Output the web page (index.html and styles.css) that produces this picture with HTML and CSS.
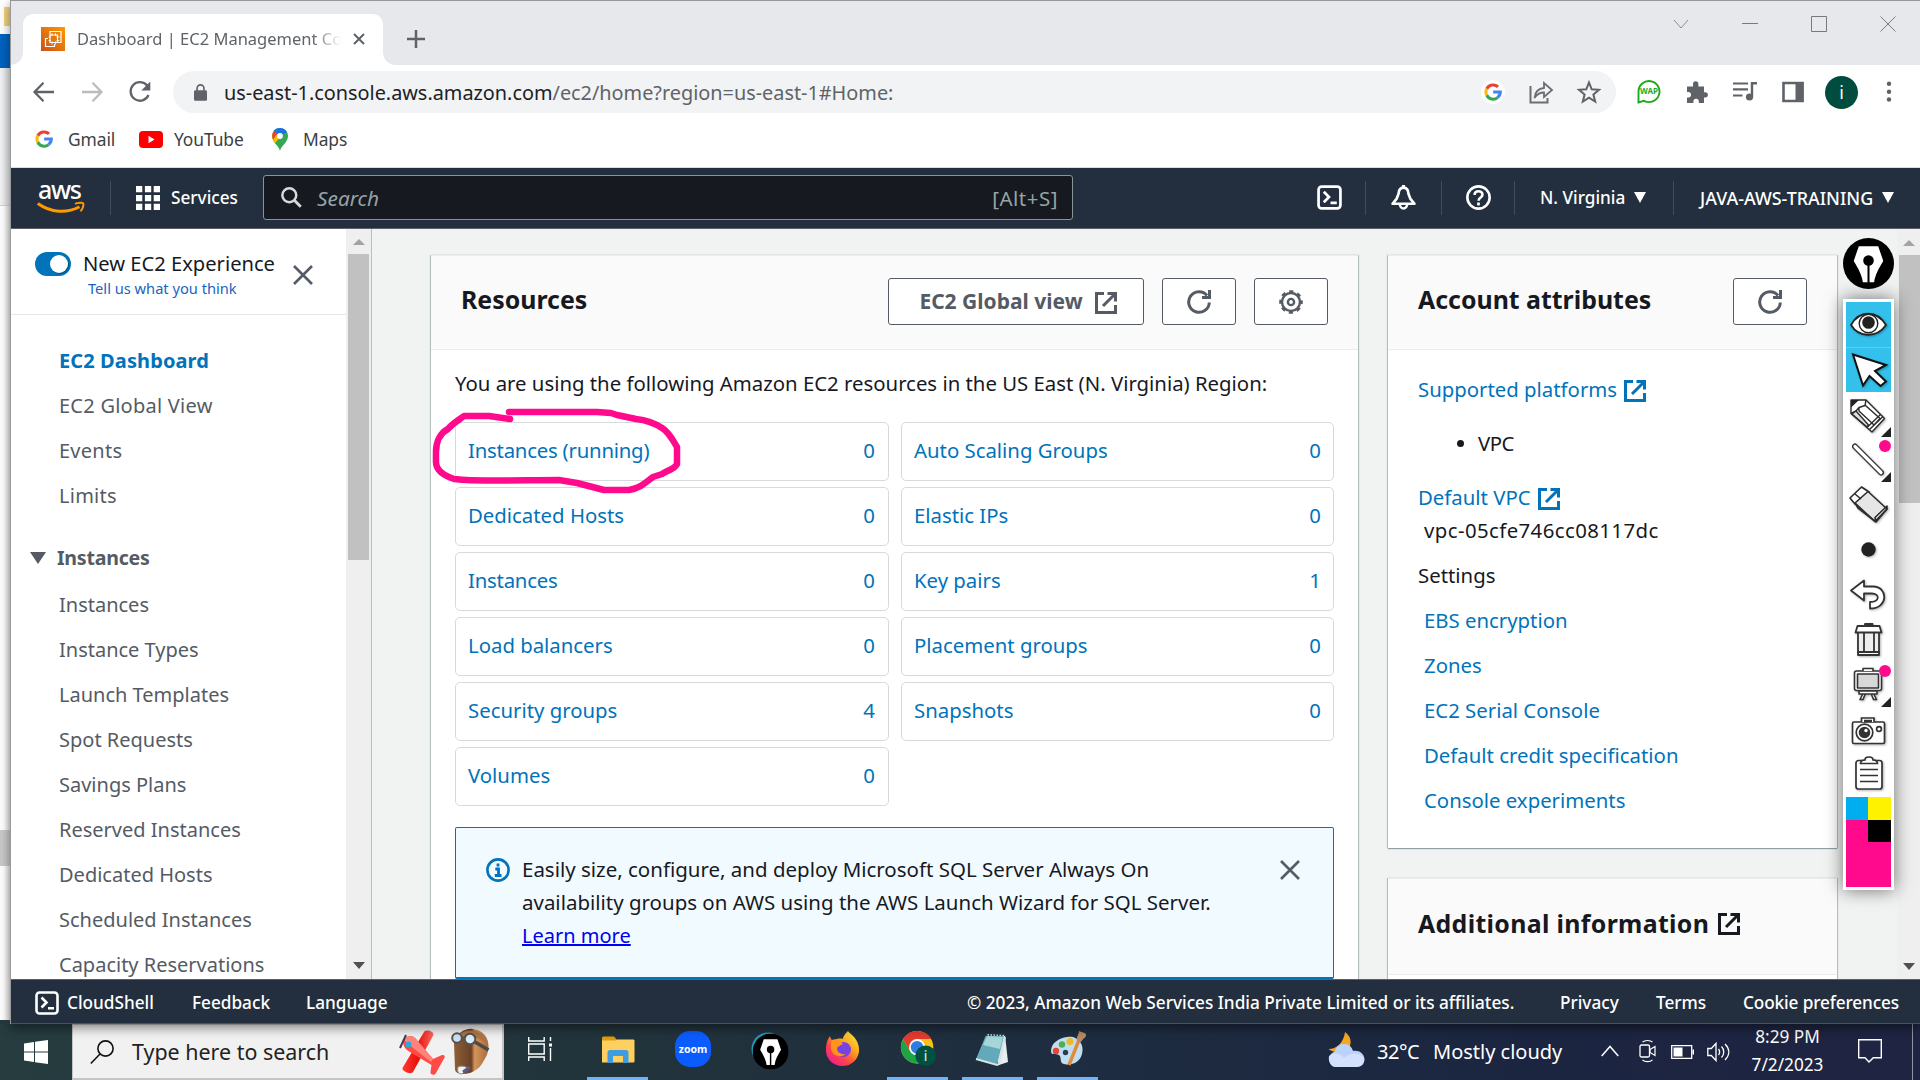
FILE: index.html
```html
<!DOCTYPE html>
<html lang="en">
<head>
<meta charset="utf-8">
<title>Dashboard | EC2 Management Console</title>
<link rel="stylesheet" href="styles.css">
</head>
<body>
<svg class="defs" width="0" height="0" aria-hidden="true">
  <defs>
    <symbol id="ext" viewBox="0 0 22 22"><path d="M9 1.500H1.500v19h19V13M12.500 1.500h8v8M20 2L8 14" fill="none" stroke="currentColor" stroke-width="3"/></symbol>
    <symbol id="refresh" viewBox="0 0 24 24"><path d="M22.300 12.500A10.300 10.300 0 1 1 20 5.500" fill="none" stroke="currentColor" stroke-width="3"/><path d="M22.500 0v7.500H15" fill="none" stroke="currentColor" stroke-width="3"/></symbol>
    <symbol id="close" viewBox="0 0 20 20"><path d="M1 1l18 18M19 1L1 19" fill="none" stroke="currentColor" stroke-width="2.600"/></symbol>
    <symbol id="shell" viewBox="0 0 24 24"><rect x="1.500" y="1.500" width="21" height="21" rx="3" fill="none" stroke="#fff" stroke-width="2.600"/><path d="M6.500 6.500l5 5-5 5M13 17.200h6" fill="none" stroke="#fff" stroke-width="2.600"/></symbol>
    <symbol id="google" viewBox="0 0 20 20"><path d="M3.100 6.400A7.900 7.900 0 0 1 15.600 4.400" fill="none" stroke="#ea4335" stroke-width="3.400"/><path d="M3.100 6.400a7.900 7.900 0 0 0 0 7.200" fill="none" stroke="#fbbc05" stroke-width="3.400"/><path d="M3.100 13.600a7.900 7.900 0 0 0 12 2.600" fill="none" stroke="#34a853" stroke-width="3.400"/><path d="M10.200 10h7.900a8 8 0 0 1-3 6.200" fill="none" stroke="#4285f4" stroke-width="3.400"/></symbol>
    <symbol id="nib" viewBox="0 0 50 50"><circle cx="25" cy="25" r="25" fill="#000"/><path d="M15.500 8h19l5 14.500C35 30 31.500 36 30.500 43.500h-11C18.500 36 15 30 10.500 22.500z" fill="#fff"/><circle cx="25" cy="22" r="5.200"/><path d="M25 22v22" stroke="#000" stroke-width="2"/></symbol>
  </defs>
</svg>
<div class="screen">
  <div class="workspace">
    <div class="behind">
      <div class="behind-top"><i class="behind-folder"></i></div>
      <div class="behind-blue"></div>
      <div class="behind-gray"></div>
      <div class="behind-white"></div>
      <div class="behind-thumb"></div>
      <div class="behind-end"></div>
    </div>
    <div class="browser">
      <div class="tabstrip">
        <div class="tab">
          <svg class="favicon" viewBox="0 0 24 24"><defs><linearGradient id="fav" x1="0" y1="1" x2="1" y2="0"><stop offset="0" stop-color="#c8511b"/><stop offset="1" stop-color="#f90"/></linearGradient></defs><path d="M0 0h24v24H0z" fill="url(#fav)"/><path d="M9 7.500V4.500h11v11h-3M7 11.500H4.500v8h9V17M9 8h7.500v7.500H9z" fill="none" stroke="#fff" stroke-width="1.200"/><path d="M11 6v11.500M14.500 6v11.500M7.500 10h11M7.500 13.500h11" stroke="#fff" stroke-width=".8"/><path d="M10 9h5.500v5.500H10z" fill="#e07b11"/></svg>
          <span class="tab-title">Dashboard | EC2 Management Co</span>
          <svg class="tab-close" viewBox="0 0 12 12"><path d="M1 1l10 10M11 1L1 11" stroke="#5f6368" stroke-width="2"/></svg>
        </div>
        <svg class="tab-new" viewBox="0 0 18 18"><path d="M9 0v18M0 9h18" stroke="#5f6368" stroke-width="2.500"/></svg>
        <div class="window-buttons">
          <svg viewBox="0 0 16 16"><path d="M1 4l7 8 7-8" fill="none" stroke="#8d8f93"/></svg>
          <svg viewBox="0 0 16 16"><path d="M0 7.500h16" stroke="#77797d"/></svg>
          <svg viewBox="0 0 16 16"><path d="M.5.5h15v15H.5z" fill="none" stroke="#77797d"/></svg>
          <svg viewBox="0 0 16 16"><path d="M.5.5l15 15M15.500.5l-15 15" stroke="#77797d"/></svg>
        </div>
      </div>
      <div class="toolbar">
        <svg class="nav-icon" viewBox="0 0 24 24"><path d="M22 12H3M11.500 2.800L2.500 12l9 9.200" fill="none" stroke="#5f6368" stroke-width="2.300"/></svg>
        <svg class="nav-icon" viewBox="0 0 24 24"><path d="M2 12h19M12.500 2.800l9 9.200-9 9.200" fill="none" stroke="#babcbe" stroke-width="2.300"/></svg>
        <svg class="nav-icon" viewBox="0 0 24 24"><path d="M20.500 15A9.300 9.300 0 1 1 19.500 6" fill="none" stroke="#5f6368" stroke-width="2.300"/><path d="M22.300 1.500v9h-9z" fill="#5f6368"/></svg>
        <div class="omnibox">
          <svg class="lock" viewBox="0 0 14 18"><rect y="6.500" width="14" height="11.500" rx="1.500" fill="#5f6368"/><path d="M3.300 7V4.500a3.700 3.700 0 0 1 7.400 0V7" fill="none" stroke="#5f6368" stroke-width="1.800"/></svg>
          <span class="url"><b>us-east-1.console.aws.amazon.com</b>/ec2/home?region=us-east-1#Home:</span>
          <span class="g-badge"><svg viewBox="0 0 20 20"><use href="#google"/></svg></span>
          <svg class="omni-icon" viewBox="0 0 24 24"><path d="M1.500 6v16.500h17V18" fill="none" stroke="#6b6e73" stroke-width="2"/><path d="M5.500 18c.5-6.500 4-9.500 9.500-10V3l8 7-8 7v-4.500c-4.500 0-7 1.500-9.500 5.500z" fill="none" stroke="#6b6e73" stroke-width="1.800"/></svg>
          <svg class="omni-icon" viewBox="0 0 24 24"><path d="M12 2.500l2.700 6.800 7.300.5-5.600 4.700 1.800 7.100L12 17.700l-6.200 3.900 1.800-7.100L2 9.800l7.300-.5z" fill="none" stroke="#5f6368" stroke-width="2"/></svg>
        </div>
        <div class="extensions">
          <svg viewBox="0 0 24 24"><path d="M1.500 22.500V11.500A10.500 10.500 0 1 1 7 20.800z" fill="#fff" stroke="#1aab1a" stroke-width="1.900"/><text x="12" y="14.200" class="wap">WAP</text></svg>
          <svg viewBox="0 0 24 24"><path d="M2 6.500h6V4a2.700 2.700 0 0 1 5.400 0v2.500H19v5.700h1.300a2.600 2.600 0 0 1 0 5.200H19V23h-5.200v-1.500a2.700 2.700 0 0 0-5.400 0V23H2v-5.500h1.300a2.700 2.700 0 0 0 0-5.400H2z" fill="#5f6368"/></svg>
          <svg viewBox="0 0 24 24"><path d="M0 3.500h15M0 9.300h15M0 15.500h9.500" stroke="#5f6368" stroke-width="2.200"/><path d="M19 17V3.200h5" fill="none" stroke="#5f6368" stroke-width="2.400"/><circle cx="16.500" cy="17" r="3.600" fill="#5f6368"/></svg>
          <svg viewBox="0 0 24 24"><path d="M2.500 3h19v18h-19z" fill="none" stroke="#5f6368" stroke-width="2.600"/><path d="M14.500 2h8v20h-8z" fill="#5f6368"/></svg>
          <span class="avatar">i</span>
          <svg viewBox="0 0 24 24"><g fill="#5f6368"><circle cx="12" cy="3.800" r="2.200"/><circle cx="12" cy="11.800" r="2.200"/><circle cx="12" cy="19.500" r="2.200"/></g></svg>
        </div>
      </div>
      <div class="bookmarks">
        <span class="bookmark bookmark-gmail"><svg viewBox="0 0 20 20"><use href="#google"/></svg>Gmail</span>
        <span class="bookmark bookmark-youtube"><svg viewBox="0 0 24 17"><rect width="24" height="17" rx="4" fill="#f00"/><path d="M9.500 4.800v7.400l6-3.700z" fill="#fff"/></svg>YouTube</span>
        <span class="bookmark bookmark-maps"><svg viewBox="0 0 16 23"><path d="M8 23C7 17.500 0 14.500 0 8a8 8 0 0 1 16 0c0 6.500-7 9.500-8 15z" fill="#34a853"/><path d="M.3 10A8 8 0 0 1 1.500 3.500L8 8.500 3 15C1.500 13.200.6 11.800.3 10z" fill="#fbbc04"/><path d="M1.700 3L0 8l1.300 3.800L8 8z" fill="#ea4335"/><path d="M1.700 3A8 8 0 0 1 15 4l-7 4z" fill="#1a73e8"/><path d="M3 15l7-8-5.500-.5L1 12z" fill="#fbbc04"/><circle cx="8" cy="8" r="2.900" fill="#fff"/></svg>Maps</span>
      </div>

      <div class="aws-nav">
        <svg class="aws-logo" viewBox="0 0 48 32"><text x="1" y="16.500" class="aws-word" textLength="44">aws</text><path d="M.8 21.500C14 31 30 31.500 42.500 24.800" fill="none" stroke="#f90" stroke-width="3"/><path d="M38 21.800c3-1.300 7.500-1.500 8.200-.5.800 1.400-.4 5.800-2.700 8" fill="none" stroke="#f90" stroke-width="2"/></svg>
        <i class="nav-divider"></i>
        <svg class="apps" viewBox="0 0 24 24"><path d="M0 0h6.300v6.300H0zM8.900 0h6.300v6.300H8.900zM17.700 0H24v6.300h-6.300zM0 8.900h6.300v6.300H0zM8.900 8.900h6.300v6.300H8.900zM17.700 8.900H24v6.300h-6.300zM0 17.700h6.300V24H0zM8.900 17.700h6.300V24H8.900zM17.700 17.700H24V24h-6.300z" fill="#fff"/></svg>
        <span class="services">Services</span>
        <div class="aws-search">
          <svg viewBox="0 0 22 22"><circle cx="8.700" cy="8.700" r="7.300" fill="none" stroke="#d5dbdb" stroke-width="2.600"/><path d="M13.700 13.700l7 7" stroke="#d5dbdb" stroke-width="3"/></svg>
          <em>Search</em><span>[Alt+S]</span>
        </div>
        <div class="aws-tools">
          <span class="tool-cell cell-shell"><svg viewBox="0 0 24 24"><use href="#shell"/></svg></span>
          <span class="tool-cell cell-bell"><svg viewBox="0 0 24 24"><path d="M12 2.500c-3 0-4.600 2.500-4.800 6L5.500 13 1.500 18h21L18.500 13l-1.700-4.500c-.2-3.500-1.800-6-4.800-6z" fill="none" stroke="#fff" stroke-width="2.600" stroke-linejoin="round"/><path d="M8.500 18.500a3.500 4 0 0 0 7 0" fill="none" stroke="#fff" stroke-width="2.400"/><path d="M12 0v4" stroke="#fff" stroke-width="3"/></svg></span>
          <span class="tool-cell cell-help"><svg viewBox="0 0 24 24"><circle cx="12" cy="12" r="10.700" fill="none" stroke="#fff" stroke-width="2.500"/><path d="M8.300 9.500C8.300 4.800 15.800 5 15.800 9.300c0 2.800-3.700 2.600-3.700 5.700" fill="none" stroke="#fff" stroke-width="2.500"/><path d="M12 16.800v2.800" stroke="#fff" stroke-width="2.600"/></svg></span>
          <span class="tool-cell cell-region">N. Virginia<i class="caret"></i></span>
          <span class="tool-cell cell-account">JAVA-AWS-TRAINING<i class="caret"></i></span>
        </div>
      </div>

      <div class="console">
        <aside class="sidebar">
          <div class="sidebar-head">
            <i class="toggle"></i>
            <div class="experience"><span>New EC2 Experience</span><a>Tell us what you think</a></div>
            <svg class="sidebar-close" viewBox="0 0 20 20"><use href="#close"/></svg>
          </div>
          <ul class="side-list side-top">
            <li class="active">EC2 Dashboard</li>
            <li>EC2 Global View</li>
            <li>Events</li>
            <li>Limits</li>
          </ul>
          <div class="side-group"><i></i>Instances</div>
          <ul class="side-list">
            <li>Instances</li>
            <li>Instance Types</li>
            <li>Launch Templates</li>
            <li>Spot Requests</li>
            <li>Savings Plans</li>
            <li>Reserved Instances</li>
            <li>Dedicated Hosts</li>
            <li>Scheduled Instances</li>
            <li>Capacity Reservations</li>
          </ul>
        </aside>
        <div class="scrollbar side-scroll"><i class="up"></i><i class="thumb"></i><i class="down"></i></div>

        <main class="main">
          <section class="card resources">
            <header class="card-head">
              <h2>Resources</h2>
              <div class="actions">
                <button class="btn btn-view">EC2 Global view<svg viewBox="0 0 22 22"><use href="#ext"/></svg></button>
                <button class="btn btn-icon"><svg viewBox="0 0 24 24"><use href="#refresh"/></svg></button>
                <button class="btn btn-icon"><svg viewBox="0 0 24 24"><circle cx="12" cy="12" r="9" fill="none" stroke="#545b64" stroke-width="2.400"/><circle cx="12" cy="12" r="10.600" fill="none" stroke="#545b64" stroke-width="2.400" stroke-dasharray="4.200 4.125" stroke-dashoffset="2.100"/><circle cx="12" cy="12" r="3.100" fill="none" stroke="#545b64" stroke-width="2.400"/></svg></button>
              </div>
            </header>
            <div class="resources-body">
              <p class="intro">You are using the following Amazon EC2 resources in the US East (N. Virginia) Region:</p>
              <div class="tiles">
                <a class="tile tight">Instances (running)<b>0</b></a><a class="tile">Auto Scaling Groups<b>0</b></a>
                <a class="tile">Dedicated Hosts<b>0</b></a><a class="tile">Elastic IPs<b>0</b></a>
                <a class="tile tight">Instances<b>0</b></a><a class="tile">Key pairs<b>1</b></a>
                <a class="tile">Load balancers<b>0</b></a><a class="tile">Placement groups<b>0</b></a>
                <a class="tile">Security groups<b>4</b></a><a class="tile">Snapshots<b>0</b></a>
                <a class="tile">Volumes<b>0</b></a>
              </div>
              <div class="notice">
                <svg class="notice-icon" viewBox="0 0 24 24"><circle cx="12" cy="12" r="10.600" fill="none" stroke="#0073bb" stroke-width="2.600"/><path d="M12 5.500v3M9.300 11h3.200v6.500M8.800 17.500h6.700" fill="none" stroke="#0073bb" stroke-width="2.800"/></svg>
                <p>Easily size, configure, and deploy Microsoft SQL Server Always On<br>availability groups on AWS using the AWS Launch Wizard for SQL Server.<br><a>Learn more</a></p>
                <svg class="notice-close" viewBox="0 0 20 20"><use href="#close"/></svg>
              </div>
            </div>
          </section>
          <div class="side-cards">
            <section class="card account">
              <header class="card-head">
                <h2>Account attributes</h2>
                <button class="btn btn-refresh"><svg viewBox="0 0 24 24"><use href="#refresh"/></svg></button>
              </header>
              <div class="account-body">
                <p><a>Supported platforms<svg viewBox="0 0 22 22"><use href="#ext"/></svg></a></p>
                <p class="vpc">VPC</p>
                <p><a>Default VPC<svg viewBox="0 0 22 22"><use href="#ext"/></svg></a></p>
                <p class="vpc-id">vpc-05cfe746cc08117dc</p>
                <p class="settings">Settings</p>
                <p class="setting"><a>EBS encryption</a></p>
                <p class="setting"><a>Zones</a></p>
                <p class="setting"><a>EC2 Serial Console</a></p>
                <p class="setting"><a>Default credit specification</a></p>
                <p class="setting"><a>Console experiments</a></p>
              </div>
            </section>
            <section class="card additional">
              <header class="card-head"><h2>Additional information<svg viewBox="0 0 22 22"><use href="#ext"/></svg></h2></header>
            </section>
          </div>
        </main>
        <div class="scrollbar main-scroll"><i class="up"></i><i class="thumb"></i><i class="down"></i></div>
      </div>

      <footer class="aws-footer">
        <svg viewBox="0 0 24 24"><use href="#shell"/></svg>
        <span class="foot-shell">CloudShell</span>
        <span class="foot-feedback">Feedback</span>
        <span>Language</span>
        <span class="foot-copy">© 2023, Amazon Web Services India Private Limited or its affiliates.</span>
        <span class="foot-privacy">Privacy</span>
        <span class="foot-terms">Terms</span>
        <span class="foot-cookie">Cookie preferences</span>
      </footer>
    </div>
  </div>

  <div class="taskbar">
    <div class="start"><svg viewBox="0 0 24 24"><path d="M0 3.400l10-1.400v9.500H0zM11 1.800L24 0v11.500H11zM0 12.500h10V22L0 20.600zM11 12.500h13V24l-13-1.800z" fill="#fff"/></svg></div>
    <div class="search">
      <svg class="search-glass" viewBox="0 0 24 24"><circle cx="15.500" cy="8.500" r="7.600" fill="none" stroke="#111" stroke-width="1.600"/><path d="M10 14L.8 23.500" stroke="#111" stroke-width="1.600"/></svg>
      <span>Type here to search</span>
      <svg class="plane" viewBox="0 0 46 46"><defs><linearGradient id="wing" x1="0" y1="0" x2="1" y2="0"><stop offset="0" stop-color="#ff3b30"/><stop offset=".5" stop-color="#e8100c"/><stop offset="1" stop-color="#ff6a60"/></linearGradient></defs><path d="M24 3c2-3 10-1 9.500 3L13 43c-2 3-11-.5-10.500-4z" fill="url(#wing)"/><path d="M4 11c2-5 9-5.500 12-1L33 30l9-4c2.500-.5 3.500 2 2 3.500L36 44c-1 3-6 2-5.500-1l1-7L10 23C4.500 20 2 15 4 11z" fill="#ff4b43"/><path d="M4 11c2-5 9-5.500 12-1L33 30l-2 3L8 15z" fill="#ff837b"/><circle cx="8.500" cy="15.500" r="3" fill="#2aa9e0"/><path d="M6 6L0 19" stroke="#443a55" stroke-width="2"/></svg>
      <svg class="pilot" viewBox="0 0 38 46"><defs><linearGradient id="hat" x1="0" y1="0" x2="1" y2="0"><stop offset="0" stop-color="#8d6038"/><stop offset=".5" stop-color="#6b4126"/><stop offset=".6" stop-color="#d3955b"/><stop offset="1" stop-color="#a96a3b"/></linearGradient></defs><path d="M3 14C5 4 14-1 22 0c10 1 16 9 15.500 18-.3 7-3 11-5.500 15-2 5-8 9-13 11-8 2-15 1-15-4z" fill="url(#hat)"/><path d="M5 10C10 1 22-1 30 5c4 3 7 7 7 11C28 7 16 4 5 10z" fill="#ad7446"/><path d="M14 7l10 6 13.500 8" fill="none" stroke="#4e4a44" stroke-width="3.500"/><circle cx="6" cy="9" r="4.800" fill="#cde0f3" stroke="#55534e" stroke-width="2"/><circle cx="19" cy="10" r="5.300" fill="#dcebfa" stroke="#55534e" stroke-width="2"/><path d="M7 38c4-2 8 0 10 1l-6 6c-4 0-5-3-4-7z" fill="#f2f2f2" stroke="#a08c79"/><path d="M12 43l7-5" stroke="#5a5b8c" stroke-width="3"/></svg>
    </div>
    <div class="task-icons">
      <span class="app first"><svg class="taskview" viewBox="0 0 24 24"><path d="M.7 0v4h15.500V0M.7 24v-4h15.500v4M.7 7h15.500v10H.7zM22.500 0v4M22.500 11v13" fill="none" stroke="#fff" stroke-width="1.400"/><path d="M21 6.500h3v3h-3z" fill="#fff"/></svg></span>
      <span class="app open"><svg viewBox="0 0 36 36"><path d="M2 7c0-1 .7-1.500 1.500-1.500H14l3 3.500h17v20H2z" fill="#dd9b0f"/><path d="M2 9.500h13l2-1h16c1 0 1.500.5 1.500 1.500v20c0 1-.5 1.500-1.500 1.500H2z" fill="#ffd05f"/><path d="M7.500 32V21.500c0-1.500 1-2.500 2.500-2.500h16c1.500 0 2.500 1 2.500 2.500V32h-5.500v-7H13v7z" fill="#3f9ce0"/></svg></span>
      <span class="app"><svg viewBox="0 0 36 36"><rect width="36" height="36" rx="15" fill="#0b5cff"/><text x="18" y="21.500" class="zoom">zoom</text></svg></span>
      <span class="app"><svg viewBox="0 0 36 36"><circle cx="18" cy="18" r="16.500" fill="#1e9abf"/><svg x="2.600" y="2.600" width="30.800" height="30.800" viewBox="0 0 50 50"><use href="#nib"/></svg></svg></span>
      <span class="app"><svg viewBox="0 0 36 36"><defs><linearGradient id="ff" x1="1" y1="0" x2=".2" y2="1"><stop offset="0" stop-color="#fff04a"/><stop offset=".4" stop-color="#ffa81c"/><stop offset=".7" stop-color="#ff4545"/><stop offset="1" stop-color="#f1189a"/></linearGradient></defs><path d="M23 0c2 3 8 6 10 13 4 11-4 22-15 22S0 27 1 17C1.500 11 3 8 5 5c.5 2 1 3 2 4 4-1 9-2 11-1 0-3 3-6 5-8z" fill="url(#ff)"/><circle cx="18.500" cy="18.500" r="7.500" fill="#7542e5"/><path d="M7 9c4-1 9 1 11 4-2 1-5 2-6 4 0 5 5 7 9 6-6 5-15 1-15-6 0-3 0-6 1-8z" fill="#ff9320"/></svg></span>
      <span class="app open"><svg viewBox="0 0 40 40"><circle cx="19" cy="18" r="18" fill="#fbc116"/><path d="M3.400 9A18 18 0 0 1 34.600 9H19l-7.800 13.500z" fill="#e33b2e"/><path d="M3.400 9A18 18 0 0 0 19 36l7.800-13.500H11.200z" fill="#1ea446"/><circle cx="19" cy="18" r="9" fill="#fff"/><circle cx="19" cy="18" r="7" fill="#2f7de1"/><circle cx="28.500" cy="27.500" r="11.500" fill="#00513f"/><text x="28.500" y="33" class="badge-i">i</text></svg></span>
      <span class="app open"><svg viewBox="0 0 36 36"><path d="M11 3l19 1 3 27-9 3z" fill="#e9eef0"/><path d="M11 4l18 1-7 29L1 28z" fill="#62aab9"/><path d="M12 5l16 1-3 12L8 14z" fill="#a6d5da"/><path d="M1 28l21 6 2-1 6-27" fill="none" stroke="#d7e2e4" stroke-width="2"/><path d="M11 3.500h19" stroke="#30383b" stroke-width="3" stroke-dasharray="1.500 1.500"/></svg></span>
      <span class="app open"><svg viewBox="0 0 36 36"><path d="M17 6C27 4 35 13 32 23c-2 8-10 12-18 10-5-1-2-7-5-9s-8 1-8-4C1 12 9 7 17 6z" fill="#bfdff0"/><circle cx="6" cy="20" r="3.200" fill="#e84335"/><circle cx="12" cy="13.500" r="3.200" fill="#50b04e"/><circle cx="20" cy="10.500" r="3.500" fill="#f4b822"/><circle cx="15.500" cy="21.500" r="2.700" fill="#263d52"/><path d="M19 34L29 9" stroke="#e3893b" stroke-width="3.400"/><path d="M27 10c-1-5 2-6 2-10 3 2 7 1 7 4s-3 3-5 7z" fill="#b98a61"/></svg></span>
    </div>
    <div class="tray">
      <svg class="weather" viewBox="0 0 37 36"><path d="M17 0c6 4 7 11 4 16S9 23 .5 17c8 0 15-6 16.500-17z" fill="#f5a623"/><path d="M8 35a8 8 0 0 1-1-15.500C8 14 12 11.500 17 12c5 .5 7 3.500 8 7 6-1 11 2.500 11.500 8 0 5-3 8-8 8z" fill="#bcd2fa"/><path d="M1 24c5-4 12-3 15 2 5-5 15-6 20 0 1 5-3 9-8 9H8c-5 0-8-5-7-11z" fill="#d3e1ff"/></svg>
      <span class="temp">32°C</span><span class="sky">Mostly cloudy</span>
      <svg class="chevron" viewBox="0 0 18 12"><path d="M.7 11L9 1.500l8.300 9.500" fill="none" stroke="#fff" stroke-width="1.500"/></svg>
      <svg class="meet" viewBox="0 0 17 24"><rect x="1" y="6" width="9.500" height="12" rx="1.500" fill="none" stroke="#fff" stroke-width="1.300"/><path d="M11 10.500l5-3v9l-5-3zM3.500 3.200c2-2.300 8-2.300 10 0M3.500 20.800c2 2.300 8 2.300 10 0" fill="none" stroke="#fff" stroke-width="1.200"/></svg>
      <svg class="battery" viewBox="0 0 23 14"><path d="M.7.700h20v12.600H.7z" fill="none" stroke="#fff" stroke-width="1.300"/><path d="M2.500 2.500h9v9h-9zM21.500 4.500H23v5h-1.500z" fill="#fff"/></svg>
      <svg class="speaker" viewBox="0 0 23 20"><path d="M.8 6.500h3.500L9 1.500v17l-4.700-5H.8z" fill="none" stroke="#fff" stroke-width="1.300"/><path d="M11.500 7c1.500 2 1.500 4 0 6M14.500 4.500c3 3 3 8 0 11M18 2c5 5 5 11 0 16" fill="none" stroke="#fff" stroke-width="1.300"/></svg>
      <span class="clock"><span>8:29 PM</span><span>7/2/2023</span></span>
      <svg class="action" viewBox="0 0 24 24"><path d="M.7.700h22.600v18h-8L11 23l-4-4.300H.7z" fill="none" stroke="#fff" stroke-width="1.400"/></svg>
      <i class="show-desktop"></i>
    </div>
  </div>

  <svg class="scribble" viewBox="0 0 256 92"><path d="M77 17L56 14H31C23 20 19 22 15 27C7 31 3 40 3 50V60C3 68 9 73 21 77C45 80 90 78 126 78L144 81 171 88H196C208 86 213 80 220 75L229 72C235 68 242 67 244 62V45C240 38 235 29 229 26C220 20 212 18 203 17L184 13 178 11 164 10H76" transform="translate(5 0)" fill="none" stroke="#ff0a8c" stroke-width="6.500" stroke-linecap="round" stroke-linejoin="round"/></svg>

  <svg class="nib-badge" viewBox="0 0 50 50"><use href="#nib"/></svg>
  <div class="palette">
    <span class="slot selected"><svg viewBox="0 0 45 45"><path d="M5 23C13 8 31 8 40 23 31 36 13 36 5 23z" fill="#fff" stroke="#222" stroke-width="1.800"/><circle cx="22.500" cy="21.500" r="9.300" fill="#fff" stroke="#222" stroke-width="1.400"/><circle cx="22.500" cy="20.500" r="6.300" fill="#222"/></svg></span>
    <span class="slot selected"><svg viewBox="0 0 45 45"><path d="M7 6.500L40 17l-11 6 11 10.500-5.500 4.500L23.500 28 17 37.500z" fill="#fff" stroke="#111" stroke-width="2"/></svg></span>
    <span class="slot"><svg viewBox="0 0 45 45"><g transform="translate(0 2)"><g fill="#fff" stroke="#2b2b2b" stroke-width="1.400" stroke-linejoin="round"><path d="M5 6h15l18.500 18.500L26 38 5 19.500z"/><path d="M5 19.500L10 17l3-3.500 6-2 1-5.500M13 13.500V17l15 14 6-6.500L19.500 11.500M21 33.500l13.500-13M23.500 35.500l13.500-13" fill="none"/><path d="M6 20l4-3 12.500 14-1.500 2z" fill="#ddd"/></g><path d="M5 6h8l-8 7.500z" fill="#222"/></g></svg><i class="more"></i></span>
    <span class="slot"><svg viewBox="0 0 45 45"><path d="M9 9.500l26 26" stroke="#333" stroke-width="6" stroke-linecap="round"/><path d="M9 9.500l26 26" stroke="#fff" stroke-width="3.200" stroke-linecap="round"/></svg><i class="mark"></i><i class="more"></i></span>
    <span class="slot"><svg viewBox="0 0 45 45"><g transform="translate(0 1)" fill="#fff" stroke="#2b2b2b" stroke-width="1.600" stroke-linejoin="round"><path d="M4 15L15.500 4l7.500 5L9 21z"/><path d="M9 20L22 8.500 41 26 29 38.500z" fill="#e6e6e6"/><path d="M9 20l3 5 18 14-1-4.500 12-11.500v3L30 39" fill="none"/><path d="M9 11l6 5" fill="none"/></g></svg></span>
    <span class="slot"><svg viewBox="0 0 45 45"><circle cx="22.500" cy="22.500" r="7.200" fill="#222"/></svg></span>
    <span class="slot"><svg viewBox="0 0 45 45"><path d="M5 18.500L18 8.500v6h9c15 0 16 22-3 22v-6.500c10 0 10-8.500 2-8.500h-8v7z" fill="#fff" stroke="#333" stroke-width="1.800" stroke-linejoin="round"/></svg></span>
    <span class="slot"><svg viewBox="0 0 45 45"><g fill="#eee" stroke="#333" stroke-width="1.800" stroke-linejoin="round"><path d="M12 14h21v21H12z"/><path d="M12 35h21v3H12z" fill="#fff"/><path d="M18 14v21M28 14v21" fill="none"/><path d="M9.500 15.500l2-6.500h22l2 6.500z" fill="#fff"/><path d="M19 8.500V7h7.500v1.500" fill="none"/></g></svg></span>
    <span class="slot"><svg viewBox="0 0 45 45"><g fill="#fff" stroke="#333" stroke-width="1.600" stroke-linejoin="round"><rect x="8.500" y="9" width="27" height="19.500" rx="2"/><path d="M11.500 12h21v14h-21z" fill="#d8d8d8"/><path d="M17 9V6.500h10V9M13 29h18v3H13zM16.500 32.500l-2.500 5h3l2-5M25.500 32.500l2 5h3l-2.500-5"/></g></svg><i class="mark"></i><i class="more"></i></span>
    <span class="slot"><svg viewBox="0 0 45 45"><g transform="translate(0 1)"><g fill="#fff" stroke="#333" stroke-width="1.700"><rect x="6.500" y="14" width="32" height="21.500" rx="1.500"/><path d="M15.500 14v-4h12.500v4"/><circle cx="18.500" cy="24.500" r="8.300"/><circle cx="33" cy="21" r="2.400"/></g><circle cx="18.500" cy="24.500" r="5.800" fill="#333"/><circle cx="20" cy="22.500" r="1.700" fill="#fff"/><path d="M18 13h8" stroke="#333" stroke-width="2.500"/></g></svg></span>
    <span class="slot"><svg viewBox="0 0 45 45"><g fill="#fff" stroke="#333" stroke-width="1.700"><rect x="10" y="8.500" width="26" height="28.500" rx="2.500"/><path d="M14.500 11.500c0-3 2-3.500 4.500-3.500 0-2 1-3 4-3s4 1 4 3c2.500 0 4.500.5 4.500 3.500z"/><path d="M14 17.500h18M14 23.500h18M14 29.500h18"/></g></svg></span>
    <div class="swatches"><i class="cyan"></i><i class="yellow"></i><i></i><i class="black"></i></div>
  </div>
</div>
</body>
</html>
```
FILE: styles.css
```css
* { box-sizing: border-box; }
body, h2, p, ul { margin: 0; padding: 0; }
body { background: #fff; font-family: "Noto Sans", "Open Sans", sans-serif; overflow: hidden; }
svg { display: block; flex: none; overflow: visible; }
i { display: block; flex: none; }
.defs { position: absolute; }

.screen { position: relative; width: 1920px; height: 1080px; overflow: hidden; display: flex; flex-direction: column; }
.workspace { display: flex; height: 1024px; flex: none; position: relative; z-index: 1; }

/* sliver of the window behind the browser */
.behind { width: 10px; display: flex; flex-direction: column; background: #fff; }
.behind-top { height: 34px; padding: 7px 0 0 4px; background: #fff; }
.behind-folder { width: 6px; height: 19px; background: #f2d27e; }
.behind-blue { height: 34px; background: #0063c0; }
.behind-gray { height: 138px; background: linear-gradient(90deg, #f3f4f6, #dfe0e2); border-bottom: 1px solid #d4d4d4; }
.behind-white { height: 624px; background: linear-gradient(90deg, #fff 40%, #e6e6e6); }
.behind-thumb { height: 36px; background: #c9c9c9; }
.behind-end { height: 154px; background: linear-gradient(90deg, #fff 40%, #e6e6e6); }
.workspace::after { content: ""; position: absolute; left: 0; top: 1020px; width: 10px; height: 4px; background: #22373b; }

.browser { width: 1910px; display: flex; flex-direction: column; background: #fff; border-left: 1px solid #9a9a9a; border-top: 1px solid #97979c; box-shadow: 0 4px 10px rgba(0,0,0,.45); }

.tabstrip { height: 64px; background: #e7e8ec; display: flex; align-items: flex-start; flex: none; padding: 13px 34px 0 12px; }
.tab { position: relative; width: 360px; height: 51px; border-radius: 10px 10px 0 0; background: #fff; display: flex; align-items: center; padding: 0 18px 1px; }
.tab::before, .tab::after { content: ""; position: absolute; bottom: 0; width: 12px; height: 12px; }
.tab::before { left: -12px; background: radial-gradient(circle at 0 0, transparent 11.5px, #fff 12px); }
.tab::after { right: -12px; background: radial-gradient(circle at 100% 0, transparent 11.5px, #fff 12px); }
.favicon { width: 24px; height: 24px; }
.tab-title { margin-left: 12px; width: 264px; white-space: nowrap; font-size: 16.500px; color: #5f6368; padding-bottom: 1px; -webkit-mask-image: linear-gradient(90deg, #000 235px, transparent 264px); mask-image: linear-gradient(90deg, #000 235px, transparent 264px); }
.tab-close { width: 12px; height: 12px; margin-left: 12px; }
.tab-new { width: 18px; height: 18px; margin: 16px 0 0 24px; }
.window-buttons { margin: 2px -10px 0 auto; display: flex; gap: 53px; }
.window-buttons svg { width: 16px; height: 16px; }

.toolbar { height: 55px; flex: none; display: flex; align-items: center; padding: 0 0 1px 21px; }
.nav-icon { width: 24px; height: 24px; margin-right: 24px; }
.omnibox { width: 1443px; height: 42px; border-radius: 21px; background: #f1f3f4; margin-left: -3px; display: flex; align-items: center; padding: 0 15px 0 21px; }
.lock { width: 13px; height: 17px; }
.url { margin: 0 auto 0 17px; font-size: 19.850px; color: #5f6368; white-space: nowrap; }
.url b { font-weight: 400; color: #202124; }
.g-badge { width: 24px; height: 24px; border-radius: 50%; background: #fff; display: flex; align-items: center; justify-content: center; margin-right: 24px; }
.g-badge svg { width: 18px; height: 18px; }
.omni-icon { width: 24px; height: 24px; margin-right: 24px; }
.omni-icon:last-child { margin-right: 0; }
.extensions { display: flex; align-items: center; gap: 24px; margin-left: 21px; }
.extensions svg { width: 24px; height: 24px; }
.extensions .avatar { width: 33px; height: 33px; margin: 0 -5px 0 -4px; border-radius: 50%; background: #004d40; color: #fff; font-size: 18px; display: flex; align-items: center; justify-content: center; }
.wap { font: 700 8px "Noto Sans", sans-serif; fill: #1aab1a; text-anchor: middle; }

.bookmarks { height: 48px; flex: none; display: flex; align-items: flex-start; padding: 4px 0 0 24px; border-bottom: 1px solid #dadce0; font-size: 17.400px; color: #3c4043; }
.bookmark { height: 30px; display: flex; align-items: center; letter-spacing: -.1px; }
.bookmark-gmail { width: 104px; gap: 15px; }
.bookmark-gmail svg { width: 18px; height: 18px; }
.bookmark-youtube { width: 133px; gap: 11px; }
.bookmark-youtube svg { width: 24px; height: 17px; }
.bookmark-maps { gap: 15px; }
.bookmark-maps svg { width: 16px; height: 23px; }

.aws-nav { height: 61px; flex: none; background: #232f3e; border-bottom: 1px solid #58616c; display: flex; align-items: center; color: #fff; font-weight: 500; font-size: 17.200px; padding: 0 0 1px 26px; white-space: nowrap; }
.aws-logo { width: 48px; height: 32px; }
.aws-word { font: 500 25px "Noto Sans", sans-serif; fill: #fff; }
.nav-divider { width: 1px; height: 34px; background: #424c58; margin: 0 25px; }
.apps { width: 24px; height: 24px; }
.services { width: 67px; margin: 0 25px 0 11px; }
.aws-search { width: 810px; height: 45px; border: 1px solid #879596; border-radius: 3px; background: #16191f; display: flex; align-items: center; padding: 0 14px 0 17px; color: #95a5a6; font-size: 20.800px; font-weight: 400; }
.aws-search svg { width: 21px; height: 21px; }
.aws-search em { margin: 0 auto 0 15px; }
.aws-search span { font-size: 20.500px; letter-spacing: .5px; }
.aws-tools { display: flex; margin-left: auto; }
.tool-cell { height: 34px; display: flex; align-items: center; border-left: 1px solid #424c58; }
.tool-cell svg { width: 25px; height: 25px; }
.cell-shell { border-left: 0; width: 48px; }
.cell-bell { width: 76px; padding-left: 25px; }
.cell-help { width: 73px; padding-left: 24px; }
.cell-region { width: 159px; padding-left: 25px; }
.cell-account { width: 247px; padding-left: 26px; font-size: 17.900px; }
.caret { border: 6px solid transparent; border-top: 11px solid #fff; border-bottom: 0; margin-left: 9px; }

.console { display: flex; height: 750px; flex: none; overflow: hidden; background: #f1f3f3; }
.sidebar { width: 335px; flex: none; color: #545b64; overflow: hidden; background: #fff; }
.sidebar-head { height: 86px; border-bottom: 1px solid #e7e9e9; display: flex; align-items: flex-start; padding: 17px 0 0 24px; }
.toggle { width: 36px; height: 24px; border-radius: 12px; background: #0073bb; margin-top: 6px; padding: 3px 3px 0 15px; }
.toggle::before { content: ""; display: block; width: 18px; height: 18px; border-radius: 50%; background: #fff; box-shadow: 1px 1px 1px #00507f; }
.experience { width: 192px; margin: 1px 18px 0 12px; white-space: nowrap; display: flex; flex-direction: column; }
.experience span { font-size: 20.150px; line-height: 32px; color: #16191f; }
.experience a { font-size: 14.650px; line-height: 18px; margin-left: 5px; color: #1764c2; }
.sidebar-close { width: 20px; height: 20px; margin-top: 19px; color: #545b64; }
.side-list { list-style: none; padding-left: 48px; font-size: 20px; }
.side-list li { height: 45px; line-height: 45px; white-space: nowrap; }
.side-top { padding-top: 23px; }
.side-top li { letter-spacing: .25px; }
.side-list .active { color: #0073bb; font-weight: 700; letter-spacing: .1px; }
.side-group { display: flex; align-items: center; height: 46px; margin-top: 17px; padding: 0 0 1px 19px; font-weight: 700; font-size: 19.600px; letter-spacing: -.25px; }
.side-group + .side-list { padding-top: 1px; }
.side-group i { border: 8px solid transparent; border-top: 12px solid #545b64; border-bottom: 0; margin: 1px 11px 0 0; }

.scrollbar { flex: none; display: flex; flex-direction: column; align-items: center; background: #efefef; }
.up { border: 6px solid transparent; border-bottom: 6px solid #a3a3a3; border-top: 0; }
.down { border: 6px solid transparent; border-top: 7px solid #505050; border-bottom: 0; margin-top: auto; }
.thumb { background: #c1c1c1; }
.side-scroll { width: 26px; border-right: 1px solid #b9bdbd; padding: 10px 0; }
.side-scroll .thumb { width: 21px; height: 306px; margin-top: 9px; }
.main-scroll { width: 23px; padding: 11px 0 9px; align-items: flex-end; }
.main-scroll .up, .main-scroll .down { margin-right: 5px; }
.main-scroll .thumb { width: 21px; height: 248px; margin-top: 9px; }

.main { flex: 1; display: flex; align-items: flex-start; gap: 30px; padding: 26px 0 0 59px; color: #16191f; font-size: 20.350px; }
.main a { color: #0073bb; }
.card { background: #fff; box-shadow: 0 1px 1px rgba(0,28,36,.35), -1px 0 1px rgba(0,28,36,.2), 1px 0 1px rgba(0,28,36,.2); }
.card-head { height: 95px; background: #fafafa; border-bottom: 1px solid #eaeded; display: flex; align-items: center; justify-content: space-between; padding: 0 30px 6px; border-top: 1px solid #eaeded; }
h2 { font-size: 24.900px; font-weight: 700; white-space: nowrap; display: flex; align-items: center; gap: 9px; padding-bottom: 2px; }
h2 svg { width: 22px; height: 22px; margin-top: 2px; }
.resources { width: 927px; height: 760px; flex: none; }
.actions { display: flex; gap: 18px; margin-top: 4px; }
.btn { height: 47px; border: 1px solid #545b64; border-radius: 3px; background: #fff; color: #545b64; font: 700 21px "Noto Sans", sans-serif; display: flex; align-items: center; justify-content: center; padding: 0 0 2px; }
.btn-view { width: 256px; gap: 12px; padding-left: 4px; }
.btn-view svg { width: 22px; height: 22px; margin-top: 4px; }
.btn-icon { width: 74px; }
.btn-icon svg, .btn-refresh svg { width: 24px; height: 24px; margin-top: 2px; }
.btn-refresh { width: 74px; margin-top: 4px; }
.resources-body { padding: 0 24px; }
.intro { height: 72px; line-height: 66px; white-space: nowrap; }
.tiles { display: grid; grid-template-columns: 434px 433px; gap: 6px 12px; }
.tile { height: 59px; border: 1px solid #d5dbdb; border-radius: 5px; display: flex; justify-content: space-between; align-items: center; padding: 0 13px 4px 12px; }
.tile:nth-child(even) { padding-right: 12px; }
.tight { letter-spacing: -.22px; }
.tile b { font-weight: 400; letter-spacing: 0; }
.notice { margin-top: 21px; height: 152px; border: 1px solid #0073bb; border-bottom-width: 2px; border-radius: 2px; background: #f1faff; display: flex; align-items: flex-start; padding: 25px 33px 0 30px; line-height: 33px; }
.notice-icon { width: 24px; height: 24px; margin: 5px 12px 0 0; }
.notice p { flex: 1; white-space: nowrap; font-size: 20.480px; }
.notice p a { color: #00e; text-decoration: underline; font-size: 20px; }
.notice-close { width: 20px; height: 20px; margin-top: 7px; color: #545b64; }

.side-cards { width: 449px; display: flex; flex-direction: column; gap: 30px; }
.account { height: 593px; }
.account-body { padding: 20px 0 0 30px; }
.account-body p { height: 38px; display: flex; align-items: center; white-space: nowrap; }
.account-body a { display: flex; align-items: center; gap: 7px; }
.account-body a svg { width: 22px; height: 22px; margin-top: 3px; }
.account-body .vpc { margin: 16px 0; padding-left: 43px; gap: 14px; letter-spacing: -.5px; }
.vpc::before { content: ""; width: 7px; height: 7px; border-radius: 50%; background: #16191f; margin-left: -4px; }
.account-body .vpc-id { height: 28px; padding-left: 6px; margin-bottom: 8px; letter-spacing: .43px; }
.account-body .setting, .account-body .settings { height: 45px; }
.setting { padding-left: 6px; }
.additional { height: 130px; }
.additional .card-head { height: 97px; }
.additional h2 { letter-spacing: .33px; }

.aws-footer { height: 45px; flex: none; background: #232f3e; border-top: 1px solid #58616c; border-bottom: 1px solid #4a525c; display: flex; align-items: center; color: #fff; font-size: 17.200px; font-weight: 500; white-space: nowrap; padding: 1px 21px 0 24px; }
.aws-footer svg { width: 24px; height: 24px; margin: 1px 8px 0 0; }
.foot-shell { width: 125px; }
.foot-feedback { width: 114px; }
.foot-copy { margin-left: auto; width: 593px; }
.foot-privacy { width: 96px; }
.foot-terms { width: 87px; }
.foot-cookie { letter-spacing: -.12px; }

.taskbar { height: 56px; flex: none; display: flex; background: linear-gradient(90deg, #263c3f, #22343b 30%, #1e2d40 55%, #1b2540 80%, #1f2442); color: #fff; }
.start { width: 72px; display: flex; align-items: center; padding-left: 24px; }
.start svg { width: 24px; height: 24px; }
.search { width: 432px; background: #f1f1f1; border: 1px solid #c4c4c4; border-bottom-width: 2px; border-right-width: 2px; display: flex; align-items: center; padding-left: 17px; }
.search-glass { width: 24px; height: 24px; }
.search span { margin-left: 18px; width: 268px; color: #222; font-size: 21.450px; white-space: nowrap; padding-bottom: 1px; }
.plane { width: 46px; height: 46px; }
.pilot { width: 38px; height: 46px; margin-left: 5px; }
.task-icons { display: flex; gap: 14px; margin-left: 5px; }
.app { width: 61px; display: flex; align-items: center; justify-content: center; padding-bottom: 3px; border-bottom: 3px solid transparent; }
.first { margin-right: 3px; }
.app svg { width: 36px; height: 36px; }
.app .taskview { width: 24px; height: 24px; }
.app.open { border-color: #6fb3f8; }
.zoom { font: 700 10.500px "Noto Sans", sans-serif; fill: #fff; text-anchor: middle; }
.badge-i { font: 500 15px "Noto Sans", sans-serif; fill: #cfe3dd; text-anchor: middle; }
.tray { margin-left: auto; display: flex; align-items: center; font-size: 20px; white-space: nowrap; }
.weather { width: 37px; height: 36px; margin-bottom: 4px; }
.temp { margin-left: 12px; width: 56px; letter-spacing: -.5px; padding-bottom: 2px; }
.sky { width: 168px; padding-bottom: 2px; }
.chevron { width: 18px; height: 12px; margin: 0 20px 2px 0; }
.meet { width: 17px; height: 24px; margin: 0 15px 2px 0; }
.battery { width: 23px; height: 14px; margin-right: 13px; }
.speaker { width: 23px; height: 20px; margin-right: 20px; }
.clock { width: 75px; display: flex; flex-direction: column; align-items: center; font-size: 17.200px; line-height: 28px; padding-bottom: 2px; }
.action { width: 24px; height: 24px; margin: 0 0 2px 33px; }
.show-desktop { width: 1px; height: 56px; background: #8f93a3; margin: 0 7px 0 30px; }

/* screen annotation layer */
.scribble { position: absolute; z-index: 4; left: 428px; top: 402px; width: 256px; height: 92px; }
.nib-badge { position: absolute; z-index: 5; left: 1843px; top: 238px; width: 51px; height: 51px; }
.palette { position: absolute; z-index: 4; left: 1843px; top: 299px; width: 51px; padding: 3px; background: #fff; box-shadow: 0 0 18px rgba(0,0,0,.55); display: flex; flex-direction: column; }
.slot { position: relative; height: 45px; }
.slot svg { width: 45px; height: 45px; filter: drop-shadow(1px 1px 1px rgba(0,0,0,.3)); }
.selected { background: #33c1ec; }
.selected + .selected { border-top: 1px solid #5fcff0; }
.more { position: absolute; right: 0; bottom: 0; border-left: 10px solid transparent; border-bottom: 10px solid #222; }
.mark { position: absolute; right: 0; top: 3px; width: 12px; height: 12px; border-radius: 50%; background: #ff0a8c; }
.swatches { height: 90px; background: #ff0a8c; display: grid; grid-template-columns: 22px 23px; grid-template-rows: 23px 22px; }
.cyan { background: #00aef0; }
.yellow { background: #fff200; }
.black { background: #000; }
```
